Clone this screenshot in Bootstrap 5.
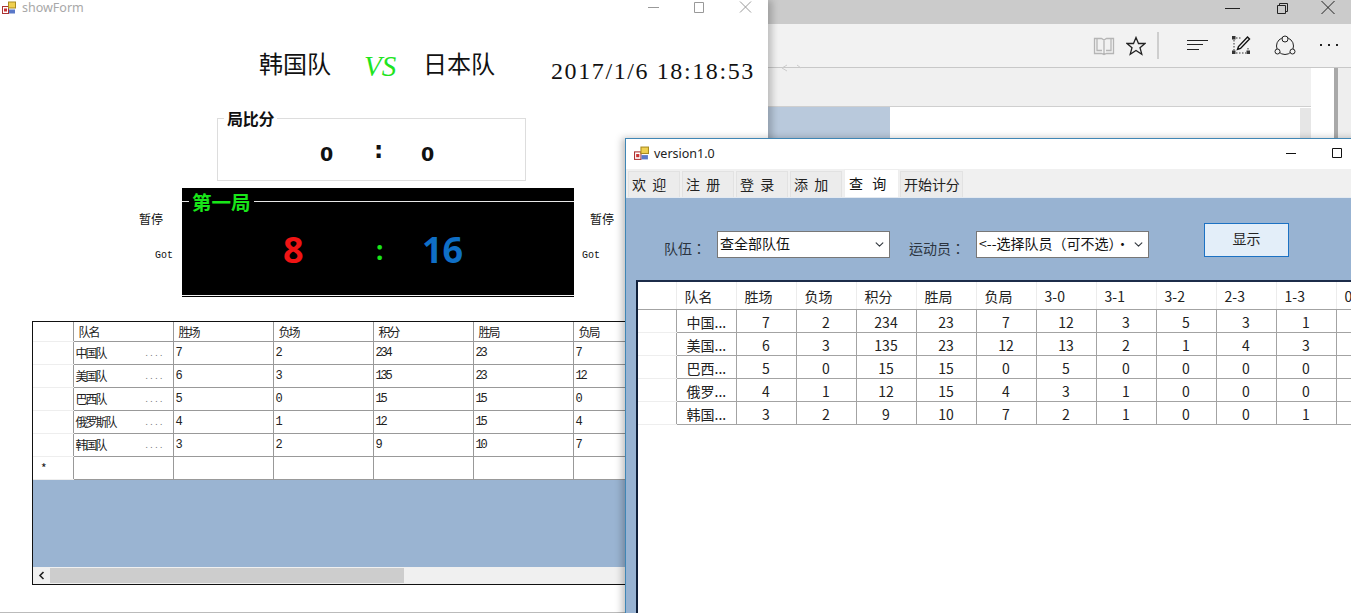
<!DOCTYPE html>
<html lang="zh">
<head>
  <meta charset="UTF-8">
  <title>showForm</title>
  <link href="https://cdn.jsdelivr.net/npm/bootstrap@5.3.3/dist/css/bootstrap.min.css" rel="stylesheet">
  <script src="https://cdn.jsdelivr.net/npm/bootstrap@5.3.3/dist/js/bootstrap.bundle.min.js"></script>
  <style>
    body { background: #fff; overflow: hidden; font-family: "Noto Sans CJK SC", sans-serif; }
    .desk { position: relative; width: 1351px; height: 613px; overflow: hidden; }

    /* 뒤쪽 브라우저 창 */
    .win-browser { position: absolute; left: 768px; top: 0; width: 583px; height: 140px; background: #f0f0f0; }
    .browser-title { height: 24px; background: #cbcbcb; }
    .browser-title svg { position: absolute; top: 0; }
    .browser-tools { height: 44px; background: #f2f2f2; border-bottom: 1px solid #c8c8c8; }
    .browser-tools svg { position: absolute; }
    .browser-gap { height: 39px; background: #f0f0f0; border-bottom: 1px solid #cfcfcf; width: 543px; }
    .browser-page { height: 32px; width: 543px; background: linear-gradient(90deg, #b9c9dc 122px, #fff 122px); }
    .browser-side { position: absolute; left: 543px; top: 68px; bottom: 0; width: 40px; background: #fff; }
    .side-rail { position: absolute; left: 23px; top: 0; bottom: 0; width: 4px; background: #a9a9a9; }
    .side-scroll { position: absolute; left: 27px; top: 0; bottom: 0; width: 13px; background: #eee; }
    .page-scroll { position: absolute; left: 532px; top: 108px; width: 11px; height: 32px; background: #e6e6e6; }

    /* showForm 창 */
    .win-show { position: absolute; left: 0; top: 0; width: 768px; height: 613px; background: #fff; box-shadow: 4px 0 7px rgba(0,0,0,.22); border-bottom: 1px solid #bbb; }
    .show-bar { height: 15px; padding-left: 2px; gap: 6px; }
    .show-bar span { font: 12.5px "Noto Sans", sans-serif; color: #a8a8a8; line-height: 14px; }
    .show-ctl { position: absolute; top: 0; }
    .match-row { height: 84px; padding: 31px 0 0 259px; }
    .team-name { font-size: 24px; line-height: 34px; color: #111; width: 73px; white-space: nowrap; }
    .vs-mark { font: italic 29px/38px "Liberation Serif", serif; color: #1fe41f; margin: 1px 29px 0 32px; width: 30px; }
    .match-time { font: 24px/28px "Liberation Serif", serif; letter-spacing: 1.6px; color: #111; margin: 11px 0 0 55px; white-space: nowrap; }
    .set-box { position: relative; width: 309px; height: 63px; margin: 19px 0 0 217px; border: 1px solid #ddd; }
    .set-title { position: absolute; left: 6px; top: -11px; padding: 0 3px; background: #fff; font-size: 16px; font-weight: 700; line-height: 20px; color: #111; letter-spacing: -.3px; }
    .set-score { height: 100%; padding: 8px 0 0 102px; font: 700 19px/24px "DejaVu Sans", sans-serif; color: #111; }
    .set-score b:nth-child(1) { width: 54px; }
    .set-score b:nth-child(2) { width: 47px; font-size: 23px; line-height: 20px; margin-top: -8px; }

    .board-row { margin: 7px 0 0 0; height: 109px; }
    .board-side { font-size: 12px; line-height: 16px; color: #111; }
    .board-side .got { font: 10px/14px "Liberation Mono", monospace; margin-top: 22px; }
    .side-l { width: 182px; padding: 23px 9px 0 0; text-align: right; }
    .side-l .pause { margin-right: 10px; }
    .side-r { padding: 23px 0 0 8px; }
    .side-r .pause { margin-left: 8px; }
    .board { position: relative; width: 392px; height: 109px; background: #000; }
    .board-line { position: absolute; left: 0; right: 0; top: 13px; border-top: 1px solid #e8e8e8; }
    .board-bottom { position: absolute; left: 0; right: 0; bottom: 1px; border-top: 1px solid #f4f4f4; }
    .board-title { position: absolute; left: 7px; top: 2px; padding: 0 3px; background: #000; color: #19e619; font-size: 19.5px; font-weight: 700; line-height: 24px; white-space: nowrap; }
    .board-score { padding: 40px 0 0 101px; font: 700 36px/44px "Noto Sans", sans-serif; }
    .score-a { color: #f01414; width: 93px; }
    .score-sep { color: #19e619; width: 46px; font-size: 26px; }
    .score-b { color: #0f6fc6; }

    .grid-wrap-l { position: absolute; left: 32px; top: 321px; width: 720px; height: 264px; border: 1px solid #111; border-width: 1px 0 1px 1px; background: #9ab4d2; overflow: hidden; }
    .grid-l { table-layout: fixed; width: 640px; background: #fff; --bs-table-bg: #fff; }
    .grid-l th, .grid-l td { width: 100px; height: 23px; padding: 0 0 0 2px; border: 0; border-left: 1px solid #999; border-bottom: 1px solid #999; font-size: 12px; font-weight: 400; letter-spacing: -2px; line-height: 22px; color: #222; white-space: nowrap; position: relative; }
    .grid-l thead th { height: 19px; line-height: 18px; padding-left: 5px; letter-spacing: -2px; }
    .grid-l .row-head { width: 40px; border-left: 0; border-bottom-color: #eee; }
    .grid-l .cell-num { font: 12px/22px "Liberation Mono", monospace; letter-spacing: -2.2px; color: #222; }
    .cell-dots { position: absolute; right: 9px; top: 1px; font: 8px/22px "Liberation Mono", monospace; letter-spacing: 0; color: #777; }
    .new-star { color: #555; font-size: 11px; line-height: 26px; padding-left: 8px !important; }
    .hbar { position: absolute; left: 0; right: 0; bottom: 0; height: 17px; background: #f0f0f0; }
    .hbar-thumb { position: absolute; left: 17px; top: 1px; width: 354px; height: 15px; background: #cdcdcd; }
    .hbar svg { position: absolute; left: 5px; top: 4px; }

    /* version1.0 창 */
    .win-ver { position: absolute; left: 625px; top: 138px; width: 760px; height: 490px; background: #98b3d2; border: 1px solid #3f86b5; box-shadow: -3px 0 7px rgba(0,0,0,.25); }
    .ver-bar { height: 30px; background: #fff; padding: 0 0 2px 8px; gap: 5px; }
    .ver-bar span { font: 12.5px "Noto Sans", sans-serif; color: #222; }
    .ver-ctl { position: absolute; top: 0; }
    .tab-strip { height: 29px; background: #f0f0f0; padding: 2px 0 0 2px; border-bottom: 1px solid #e4eaf1; gap: 2px; flex-wrap: nowrap; }
    .tab-strip .nav-link { height: 26px; padding: 0 0 0 3px; width: 52px; background: #ececec; border: 1px solid #e2e2e2; border-bottom: 0; border-radius: 0; color: #222; font-size: 14px; line-height: 25px; word-spacing: 3px; text-align: left; white-space: nowrap; }
    .tab-strip .nav-link.active { height: 28px; margin-top: -2px; width: 55px; padding-left: 4px; background: #fff; border-color: #eee; color: #111; line-height: 26px; word-spacing: 6px; }
    .tab-strip .tab-wide { width: 63px; margin-left: -1px; padding-left: 3px; letter-spacing: -.05px; }
    .tab-body { padding: 25px 0 0 10px; }
    .filter-row { height: 58px; }
    .filter-label { font-family: "Noto Sans CJK TC", sans-serif; font-size: 14px; color: #2b3440; line-height: 20px; padding-top: 15px; white-space: nowrap; }
    .pick { width: 173px; height: 27px; padding: 0 0 3px 2px; margin-top: 8px; border: 1px solid #777; border-radius: 0; font-size: 14px; color: #111; background-size: 11px 9px; background-position: right 4px center; }
    .btn-show { width: 85px; height: 34px; margin: 0 0 0 55px; padding: 0 0 3px; font-size: 14px; color: #222; background: #e3eef9; border: 1px solid #1c72c4; border-radius: 0; }
    .grid-wrap-r { width: 760px; height: 340px; background: #fff; border-left: 2px solid #10203a; border-top: 2px solid #1c2c4a; margin-top: -1px; }
    .grid-r { table-layout: fixed; width: 758px; --bs-table-bg: #fff; }
    .grid-r th, .grid-r td { width: 60px; height: 23px; padding: 2px 0 0; border: 0; border-left: 1px solid #a3a3a3; border-bottom: 1px solid #a3a3a3; font-size: 14px; font-weight: 400; line-height: 20px; color: #222; text-align: center; white-space: nowrap; overflow: hidden; }
    .grid-r thead th { height: 27px; padding: 0 0 0 8px; line-height: 26px; text-align: left; border-left-color: #ececec; }
    .grid-r .row-head { width: 38px; border-left: 0; border-bottom-color: #eee; }
    .grid-r thead .row-head { border-bottom-color: #a3a3a3; }
    .grid-r .name-cell { text-align: left; padding-left: 10px; }
  </style>
</head>
<body>
<div class="desk">

  <!-- 브라우저 창 -->
  <div class="win-browser">
    <div class="browser-title">
      <svg style="left:456px" width="16" height="16" viewBox="0 0 16 16"><path d="M1 8.500h15" stroke="#222" fill="none"/></svg>
      <svg style="left:508px;top:2px" width="13" height="13" viewBox="0 0 13 13"><path d="M3.500 3.500V1.500h8v8h-2M1.500 3.500h8v8h-8z" stroke="#222" fill="none"/></svg>
      <svg style="left:552px" width="16" height="16" viewBox="0 0 16 16"><path d="M1.500 1l13 13M14.500 1l-13 13" stroke="#222" fill="none"/></svg>
    </div>
    <div class="browser-tools">
      <svg style="left:325px;top:36px" width="22" height="20" viewBox="0 0 22 20"><path d="M1.500 2.500h7l2.500 1.500 2.500-1.500h7v15h-7l-2.500 1-2.500-1h-7zM11 4v15M4 2.500v12h5M18 2.500v12h-5" stroke="#b5b5b5" stroke-width="1.300" fill="none"/></svg>
      <svg style="left:358px;top:36px" width="20" height="20" viewBox="0 0 20 20"><path d="M10 1.500l2.500 6h6.500l-5 4.200 1.800 6.500-5.800-3.700-5.800 3.700 1.800-6.500-5-4.200h6.500z" stroke="#222" stroke-width="1.300" fill="none"/></svg>
      <svg style="left:389px;top:32px" width="2" height="27" viewBox="0 0 2 27"><path d="M1 0v27" stroke="#aaa"/></svg>
      <svg style="left:419px;top:39px" width="21" height="12" viewBox="0 0 21 12"><path d="M0 1.500h21M0 5.500h16M0 10.500h12" stroke="#222" stroke-width="1.200"/></svg>
      <svg style="left:463px;top:35px" width="20" height="20" viewBox="0 0 20 20"><path d="M3 5v11M5 18h10M5 3h6M17 13v3" stroke="#333" stroke-dasharray="1.500 1.500" fill="none"/><path d="M1 1h3.500v3.500H1zM1 15.500h3.500V19H1zM15.500 15.500H19V19h-3.500z" fill="#333"/><path d="M16.500 2l2 2-9 9.500-3 1 1-3z" stroke="#111" stroke-width="1.400" fill="none"/></svg>
      <svg style="left:506px;top:35px" width="22" height="22" viewBox="0 0 22 22"><circle cx="11" cy="11" r="8.500" stroke="#222" fill="none"/><circle cx="11" cy="4" r="3" stroke="#222" fill="#f2f2f2"/><circle cx="3.500" cy="16.500" r="2.500" stroke="#222" fill="#f2f2f2"/><circle cx="18.500" cy="16.500" r="2.500" stroke="#222" fill="#f2f2f2"/></svg>
      <svg style="left:552px;top:43px" width="18" height="4" viewBox="0 0 18 4"><path d="M0 1h2v2H0zM8 1h2v2H8zM16 1h2v2h-2z" fill="#222"/></svg>
      <svg style="left:12px;top:64px" width="22" height="10" viewBox="0 0 22 10"><path d="M7 1L2 4l5 3M17 1l4 3" stroke="#ccc" fill="none"/></svg>
    </div>
    <div class="browser-gap"></div>
    <div class="browser-page"></div>
    <div class="page-scroll"></div>
    <div class="browser-side"><div class="side-rail"></div><div class="side-scroll"></div></div>
  </div>

  <!-- showForm -->
  <div class="win-show">
    <div class="show-bar d-flex align-items-center">
      <svg width="14" height="14" viewBox="0 0 14 14"><rect x="0.500" y="5.500" width="6" height="7" fill="#fff" stroke="#a33"/><rect x="2" y="7.500" width="3" height="3" fill="#c33"/><rect x="6.500" y="1" width="7" height="6" fill="#f0d050" stroke="#a98b20"/><rect x="7" y="8.500" width="6" height="4" fill="#5a78c8"/></svg>
      <span>showForm</span>
    </div>
    <svg class="show-ctl" style="left:648px" width="12" height="14" viewBox="0 0 12 14"><path d="M0 7.500h11" stroke="#999"/></svg>
    <svg class="show-ctl" style="left:693px" width="12" height="14" viewBox="0 0 12 14"><path d="M1.500 2.500h9v10h-9z" stroke="#999" fill="none"/></svg>
    <svg class="show-ctl" style="left:739px" width="13" height="14" viewBox="0 0 13 14"><path d="M1 1.500l11 11M12 1.500l-11 11" stroke="#999" fill="none"/></svg>

    <div class="match-row d-flex align-items-start">
      <div class="team-name">韩国队</div>
      <div class="vs-mark">VS</div>
      <div class="team-name">日本队</div>
      <div class="match-time">2017/1/6 18:18:53</div>
    </div>

    <div class="set-box">
      <div class="set-title">局比分</div>
      <div class="set-score d-flex align-items-center"><b>0</b><b>:</b><b>0</b></div>
    </div>

    <div class="board-row d-flex">
      <div class="board-side side-l"><div class="pause">暂停</div><div class="got">Got</div></div>
      <div class="board">
        <div class="board-line"></div>
        <div class="board-bottom"></div>
        <div class="board-title">第一局</div>
        <div class="board-score d-flex"><div class="score-a">8</div><div class="score-sep">:</div><div class="score-b">16</div></div>
      </div>
      <div class="board-side side-r"><div class="pause">暂停</div><div class="got">Got</div></div>
    </div>

    <div class="grid-wrap-l">
      <table class="table mb-0 grid-l">
        <thead><tr><th class="row-head"></th><th>队名</th><th>胜场</th><th>负场</th><th>积分</th><th>胜局</th><th>负局</th></tr></thead>
        <tbody id="rowsLeft"></tbody>
      </table>
      <div class="hbar">
        <svg width="7" height="9" viewBox="0 0 7 9"><path d="M5.500 1L2 4.500 5.500 8" stroke="#222" stroke-width="1.600" fill="none"/></svg>
        <div class="hbar-thumb"></div>
      </div>
    </div>
  </div>

  <!-- version1.0 -->
  <div class="win-ver">
    <div class="ver-bar d-flex align-items-center">
      <svg width="15" height="15" viewBox="0 0 14 14"><rect x="0.500" y="5.500" width="6" height="7" fill="#fff" stroke="#a33"/><rect x="2" y="7.500" width="3" height="3" fill="#c33"/><rect x="6.500" y="1" width="7" height="6" fill="#f0d050" stroke="#a98b20"/><rect x="7" y="8.500" width="6" height="4" fill="#5a78c8"/></svg>
      <span>version1.0</span>
    </div>
    <svg class="ver-ctl" style="left:659px" width="12" height="30" viewBox="0 0 12 30"><path d="M1 14.500h10" stroke="#111"/></svg>
    <svg class="ver-ctl" style="left:705px" width="12" height="30" viewBox="0 0 12 30"><path d="M1.500 9.500h9v9h-9z" stroke="#111" fill="none"/></svg>

    <ul class="nav tab-strip">
      <li class="nav-item"><a class="nav-link" href="#">欢 迎</a></li>
      <li class="nav-item"><a class="nav-link" href="#">注 册</a></li>
      <li class="nav-item"><a class="nav-link" href="#">登 录</a></li>
      <li class="nav-item"><a class="nav-link" href="#">添 加</a></li>
      <li class="nav-item"><a class="nav-link active" href="#">查 询</a></li>
      <li class="nav-item"><a class="nav-link tab-wide" href="#">开始计分</a></li>
    </ul>

    <div class="tab-body">
      <div class="filter-row d-flex align-items-start">
        <div class="filter-label" lang="zh-Hant" style="margin-left:28px;width:53px">队伍：</div>
        <select class="form-select pick"><option>查全部队伍</option></select>
        <div class="filter-label" lang="zh-Hant" style="margin-left:19px;width:67px">运动员：</div>
        <select class="form-select pick"><option>&lt;--选择队员（可不选）·</option></select>
        <button type="button" class="btn btn-show">显示</button>
      </div>
      <div class="grid-wrap-r">
        <table class="table mb-0 grid-r">
          <thead><tr><th class="row-head"></th><th>队名</th><th>胜场</th><th>负场</th><th>积分</th><th>胜局</th><th>负局</th><th>3-0</th><th>3-1</th><th>3-2</th><th>2-3</th><th>1-3</th><th>0-3</th></tr></thead>
          <tbody id="rowsRight"></tbody>
        </table>
      </div>
    </div>
  </div>
</div>

<script>
  // 팀 데이터
  const teams = [
    ['中国队', 7, 2, 234, 23, 7, 12, 3, 5, 3, 1, 0],
    ['美国队', 6, 3, 135, 23, 12, 13, 2, 1, 4, 3, 0],
    ['巴西队', 5, 0, 15, 15, 0, 5, 0, 0, 0, 0, 0],
    ['俄罗斯队', 4, 1, 12, 15, 4, 3, 1, 0, 0, 0, 0],
    ['韩国队', 3, 2, 9, 10, 7, 2, 1, 0, 0, 1, 0]
  ];

  let left = '';
  let right = '';
  teams.forEach(t => {
    left += '<tr><td class="row-head"></td><td>' + t[0] + '<span class="cell-dots">....</span></td>';
    t.slice(1, 6).forEach(v => { left += '<td class="cell-num">' + v + '</td>'; });
    left += '</tr>';

    right += '<tr><td class="row-head"></td><td class="name-cell">' + t[0].slice(0, 2) + '...</td>';
    t.slice(1).forEach(v => { right += '<td>' + v + '</td>'; });
    right += '</tr>';
  });
  left += '<tr><td class="row-head new-star">*</td><td></td><td></td><td></td><td></td><td></td><td></td></tr>';

  document.querySelector('#rowsLeft').innerHTML = left;
  document.querySelector('#rowsRight').innerHTML = right;
</script>
</body>
</html>
